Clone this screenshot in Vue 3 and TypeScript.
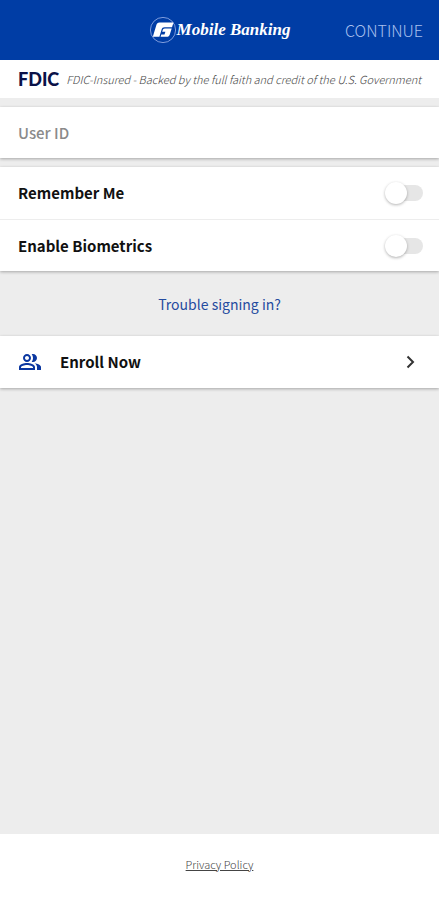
<script setup lang="ts">
import { ref } from 'vue'

interface Setting {
  id: string
  label: string
}

const settings: Setting[] = [
  { id: 'remember', label: 'Remember Me' },
  { id: 'biometrics', label: 'Enable Biometrics' },
]

const userId = ref('')
const enabled = ref<string[]>([])
</script>

<template>
  <div class="page">
    <header class="header">
      <div class="brand">
        <svg class="brand-mark" viewBox="0 0 28 28" aria-hidden="true">
          <circle cx="14" cy="14" r="12.6" fill="none" stroke="#7d9bdc" stroke-width="1" />
          <path
            d="M10.500 6.500H24.500L23 11.300H15.500c-1.600 0-2.400.7-2.900 2.100L10.400 20.800H3.800L7.300 9.200C7.900 7.300 8.700 6.500 10.500 6.500Z"
            fill="#fff"
          />
          <path d="M15.800 12.600h6.900l-1.900 5.800c-.5 1.700-1.400 2.400-3 2.400h-6.200l.7-2.300h3.200l.9-2.800h-3.200l.3-1c.4-1.400 1.100-2.100 2.300-2.100Z" fill="#fff" />
        </svg>
        <span class="brand-name">Mobile Banking</span>
      </div>
      <button class="continue" type="submit" form="sign-in">CONTINUE</button>
    </header>

    <div class="fdic">
      <strong class="fdic-logo">FDIC</strong>
      <em class="fdic-text">FDIC-Insured - Backed by the full faith and credit of the U.S. Government</em>
    </div>

    <main class="content">
      <form id="sign-in" class="form" @submit.prevent>
        <div class="card">
          <input v-model="userId" class="user-id" type="text" placeholder="User ID" aria-label="User ID" autocomplete="username" />
        </div>
        <div class="card">
          <label v-for="item in settings" :key="item.id" class="row setting" :for="item.id">
            <span>{{ item.label }}</span>
            <input :id="item.id" v-model="enabled" class="switch" type="checkbox" :value="item.id" />
          </label>
        </div>
      </form>

      <a class="trouble" href="#trouble">Trouble signing in?</a>

      <a class="card row enroll" href="#enroll">
        <svg class="people" viewBox="0 0 24 24" aria-hidden="true">
          <path
            fill="currentColor"
            d="M16.670 13.130C18.040 14.060 19 15.320 19 17v3h4v-3c0-2.180-3.570-3.470-6.330-3.870zM15 12c2.210 0 4-1.790 4-4s-1.790-4-4-4c-.47 0-.91.1-1.330.24C14.500 5.270 15 6.580 15 8s-.5 2.730-1.330 3.760c.42.14.86.24 1.330.24zM9 12c2.210 0 4-1.790 4-4s-1.790-4-4-4-4 1.790-4 4 1.790 4 4 4zm0-6c1.100 0 2 .9 2 2s-.9 2-2 2-2-.9-2-2 .9-2 2-2zM9 13c-2.670 0-8 1.340-8 4v3h16v-3c0-2.660-5.330-4-8-4zm6 5H3v-.99C3.200 16.290 6.300 15 9 15s5.800 1.290 6 2v1z"
          />
        </svg>
        <span class="enroll-label">Enroll Now</span>
        <svg class="chevron" viewBox="0 0 24 24" aria-hidden="true">
          <path d="M8.500 6.500 14 12 8.500 17.500" fill="none" stroke="#333" stroke-width="2" />
        </svg>
      </a>
    </main>

    <footer class="footer">
      <a class="privacy" href="#privacy">Privacy Policy</a>
    </footer>
  </div>
</template>

<style>
body {
  margin: 0;
  background: #ededed;
}
</style>

<style scoped>
.page {
  display: flex;
  flex-direction: column;
  min-height: 100vh;
  background: #ededed;
  color: #111;
  font-family: "Noto Sans CJK SC", "Open Sans", sans-serif;
  font-size: 15px;
  line-height: 24px;
}

.page *,
.page *::before {
  box-sizing: border-box;
}

.header {
  display: grid;
  grid-template-columns: 1fr auto 1fr;
  align-items: center;
  height: 60px;
  padding: 0 16px;
  background: #003da5;
}

.brand {
  display: flex;
  grid-column: 2;
  align-items: center;
}

.brand-mark {
  width: 28px;
  height: 28px;
}

.brand-name {
  color: #fff;
  font-family: "Liberation Serif", serif;
  font-size: 17px;
  font-style: italic;
  font-weight: 700;
}

.continue {
  justify-self: end;
  padding: 0;
  border: 0;
  background: none;
  color: #a9c0ee;
  font: inherit;
  font-size: 16px;
  font-weight: 300;
}

.fdic {
  display: flex;
  align-items: center;
  gap: 7px;
  height: 38px;
  padding: 0 12px 0 18px;
  background: #fff;
  white-space: nowrap;
}

.fdic-logo {
  color: #0b1248;
  font-family: Lato, sans-serif;
  font-size: 18px;
  font-weight: 900;
}

.fdic-text {
  color: #444;
  font-size: 11px;
  font-weight: 300;
}

.content {
  display: flex;
  flex: 1;
  flex-direction: column;
  padding-top: 9px;
}

.form {
  display: flex;
  flex-direction: column;
  gap: 9px;
}

.card {
  background: #fff;
  box-shadow: 0 1px 3px rgba(0, 0, 0, 0.3);
}

.user-id {
  display: block;
  width: 100%;
  height: 51px;
  padding: 0 18px;
  border: 0;
  background: none;
  color: #111;
  font: inherit;
  font-weight: 500;
}

.user-id::placeholder {
  color: #8a8a8a;
  opacity: 1;
}

.row {
  display: flex;
  align-items: center;
  height: 52px;
  padding: 0 16px 0 18px;
  font-weight: 700;
}

.setting {
  justify-content: space-between;
}

.setting + .setting {
  border-top: 1px solid #ededed;
}

.switch {
  display: flex;
  align-items: center;
  width: 36px;
  height: 16px;
  margin: 0;
  border-radius: 8px;
  appearance: none;
  background: #e6e6e6;
}

.switch::before {
  flex: none;
  width: 22px;
  height: 22px;
  margin-left: -2px;
  border-radius: 50%;
  background: #fff;
  box-shadow: 0 1px 3px rgba(0, 0, 0, 0.3);
  content: "";
}

.switch:checked {
  justify-content: flex-end;
  background: #8ca9dd;
}

.trouble {
  align-self: center;
  padding: 21px 0 20px;
  color: #254b9f;
  font-size: 14px;
  text-decoration: none;
}

.enroll {
  gap: 18px;
  color: inherit;
  text-decoration: none;
}

.people {
  width: 24px;
  height: 24px;
  color: #0b37a0;
}

.enroll-label {
  flex: 1;
}

.chevron {
  width: 24px;
  height: 24px;
}

.footer {
  display: flex;
  justify-content: center;
  height: 66px;
  padding-top: 18px;
  background: #fff;
}

.privacy {
  color: #444;
  font-size: 11px;
  font-weight: 300;
}
</style>
